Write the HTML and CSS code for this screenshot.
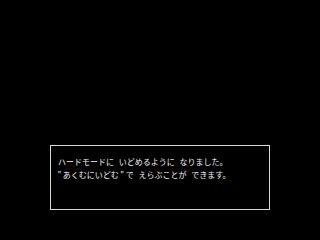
FILE: index.html
```html
<!DOCTYPE html>
<html lang="ja">
<head>
    <meta charset="UTF-8">
    <title>メッセージ</title>
    <link rel="stylesheet" href="styles.css">
</head>
<body>
    <div class="screen">
        <div class="message-box">
            <p>ハードモードに いどめるように なりました。</p>
            <p class="quoted"><span class="quote">"</span>あくむにいどむ<span class="quote">"</span>で えらぶことが できます。</p>
        </div>
    </div>
</body>
</html>
```

FILE: styles.css
```css
* {
    margin: 0;
    padding: 0;
    box-sizing: border-box;
}
body {
    background: #000;
    width: 320px;
    height: 240px;
    overflow: hidden;
}
.screen {
    padding: 145px 0 0 50px;
}
.message-box {
    width: 220px;
    height: 65px;
    border: 1px solid #d8d8d8;
    padding: 9px 0 0 7px;
    color: #f2f2f2;
    font-family: "Noto Sans CJK JP", sans-serif;
    font-size: 8px;
    line-height: 13px;
    word-spacing: 3px;
}
.quoted {
    margin-left: -2px;
}
.quote {
    padding: 0 1.5px;
}
```
